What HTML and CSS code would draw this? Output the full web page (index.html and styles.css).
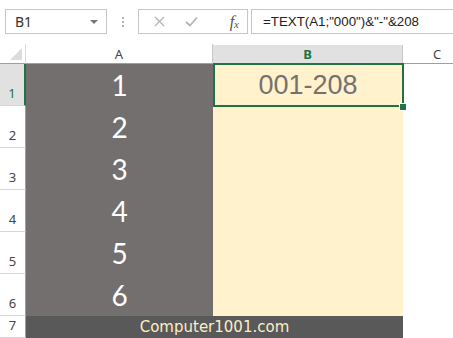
FILE: index.html
```html
<!DOCTYPE html>
<html lang="en">
<head>
  <meta charset="UTF-8" />
  <title>TEXT formula - Excel</title>
  <link rel="stylesheet" href="styles.css">
</head>
<body>
  <!-- Name box and formula bar -->
  <div class="toolbar">
    <div class="name-box">
      <span>B1</span>
      <span class="caret"></span>
    </div>
    <div class="grip"><i></i><i></i><i></i></div>
    <div class="buttons">
      <svg class="btn-icon" width="11" height="11" viewBox="0 0 11 11">
        <path d="M1 1L10 10M10 1L1 10" stroke="#b4b4b4" stroke-width="1.3" fill="none"/>
      </svg>
      <svg class="btn-icon" width="13" height="11" viewBox="0 0 13 11">
        <path d="M1 6L5 9.5L12 1.5" stroke="#b4b4b4" stroke-width="1.8" fill="none"/>
      </svg>
      <span class="fx">f<sub>x</sub></span>
    </div>
    <div class="formula">=TEXT(A1;"000")&amp;"-"&amp;208</div>
  </div>

  <!-- Worksheet -->
  <div class="sheet">
    <div class="corner"><span class="corner-tri"></span></div>
    <div class="col-head">A</div>
    <div class="col-head active">B</div>
    <div class="col-head last">C</div>

    <div class="row-head active">1</div>
    <div class="cell num">1</div>
    <div class="cell result selected">001-208<span class="handle"></span></div>
    <div class="cell blank"></div>

    <div class="row-head">2</div>
    <div class="cell num">2</div>
    <div class="cell result"></div>
    <div class="cell blank"></div>

    <div class="row-head">3</div>
    <div class="cell num">3</div>
    <div class="cell result"></div>
    <div class="cell blank"></div>

    <div class="row-head">4</div>
    <div class="cell num">4</div>
    <div class="cell result"></div>
    <div class="cell blank"></div>

    <div class="row-head">5</div>
    <div class="cell num">5</div>
    <div class="cell result"></div>
    <div class="cell blank"></div>

    <div class="row-head">6</div>
    <div class="cell num">6</div>
    <div class="cell result"></div>
    <div class="cell blank"></div>

    <div class="row-head">7</div>
    <div class="cell footer">Computer1001.com</div>
    <div class="cell blank"></div>
  </div>
</body>
</html>
```
FILE: styles.css
```css
* {
  box-sizing: border-box;
  margin: 0;
  padding: 0;
}

body {
  background: #fff;
  font-family: 'Noto Sans', 'Liberation Sans', sans-serif;
  color: #333;
  width: 453px;
  height: 338px;
  overflow: hidden;
}

/* Top bar */
.toolbar {
  display: flex;
  align-items: stretch;
  height: 25px;
  margin: 9px 0 10px 5px;
}

.name-box {
  width: 102px;
  border: 1px solid #c6c6c6;
  display: flex;
  align-items: center;
  justify-content: space-between;
  padding: 0 8px 0 9px;
  font-size: 14px;
  color: #333;
}

.caret {
  width: 0;
  height: 0;
  border-left: 4px solid transparent;
  border-right: 4px solid transparent;
  border-top: 4px solid #777;
}

.grip {
  width: 31px;
  display: flex;
  flex-direction: column;
  align-items: center;
  justify-content: center;
  gap: 2px;
}

.grip i {
  width: 2px;
  height: 2px;
  background: #b0b0b0;
}

.buttons {
  width: 110px;
  border: 1px solid #c6c6c6;
  display: flex;
  align-items: center;
  padding: 0 8px 0 15px;
}

.buttons .btn-icon + .btn-icon {
  margin-left: 20px;
}

.fx {
  margin-left: auto;
  font-family: 'Liberation Serif', serif;
  font-style: italic;
  font-size: 16px;
  color: #555;
}

.fx sub {
  font-size: 11px;
  vertical-align: -1px;
}

.formula {
  flex: 1;
  margin-left: 3px;
  border: 1px solid #c6c6c6;
  border-right: none;
  display: flex;
  align-items: center;
  padding-left: 11px;
  font-family: 'Liberation Sans', sans-serif;
  font-size: 13.3px;
  color: #222;
}

/* Sheet grid */
.sheet {
  display: grid;
  grid-template-columns: 26px 187px 190px 1fr;
  grid-template-rows: 20px repeat(6, 42px) 22px;
}

.corner {
  position: relative;
  border-right: 1px solid #dadada;
  border-bottom: 1px solid #9f9f9f;
}

.corner-tri {
  position: absolute;
  right: 3px;
  bottom: 3px;
  width: 0;
  height: 0;
  border-left: 12px solid transparent;
  border-bottom: 12px solid #dcdcdc;
}

.col-head {
  display: flex;
  align-items: center;
  justify-content: center;
  font-size: 13px;
  color: #444;
  border-bottom: 1px solid #9f9f9f;
  border-right: 1px solid #c8c8c8;
}

.col-head.active {
  background: #e1e1e1;
  color: #217346;
  font-weight: bold;
  border-bottom: 1px solid #217346;
  margin-top: 1px;
}

.col-head.last {
  border-right: none;
  justify-content: flex-start;
  padding-left: 30px;
}

.row-head {
  display: flex;
  align-items: flex-end;
  justify-content: center;
  padding-bottom: 3px;
  font-size: 13px;
  color: #444;
  border-right: 1px solid #9f9f9f;
  border-bottom: 1px solid #d6d6d6;
}

.row-head.active {
  background: #e1e1e1;
  color: #217346;
  border-right: 2px solid #217346;
}

.cell {
  display: flex;
  align-items: center;
  justify-content: center;
}

.num {
  background: #736f6e;
  color: #fff;
  font-family: 'Lato', sans-serif;
  font-size: 28px;
}

.result {
  background: #fff2cc;
  font-family: 'Liberation Sans', sans-serif;
  font-size: 27px;
  color: #767171;
}

.selected {
  position: relative;
}

.selected::after {
  content: "";
  position: absolute;
  top: -1px;
  left: 0;
  right: -1px;
  bottom: -1px;
  border: 2px solid #217346;
}

.handle {
  position: absolute;
  right: -3px;
  bottom: -4px;
  width: 6px;
  height: 6px;
  background: #217346;
  outline: 1px solid #fff;
  z-index: 1;
}

.footer {
  grid-column: 2 / span 2;
  background: #595959;
  color: #fdeec6;
  font-family: 'DejaVu Sans', sans-serif;
  font-size: 15px;
}
```
